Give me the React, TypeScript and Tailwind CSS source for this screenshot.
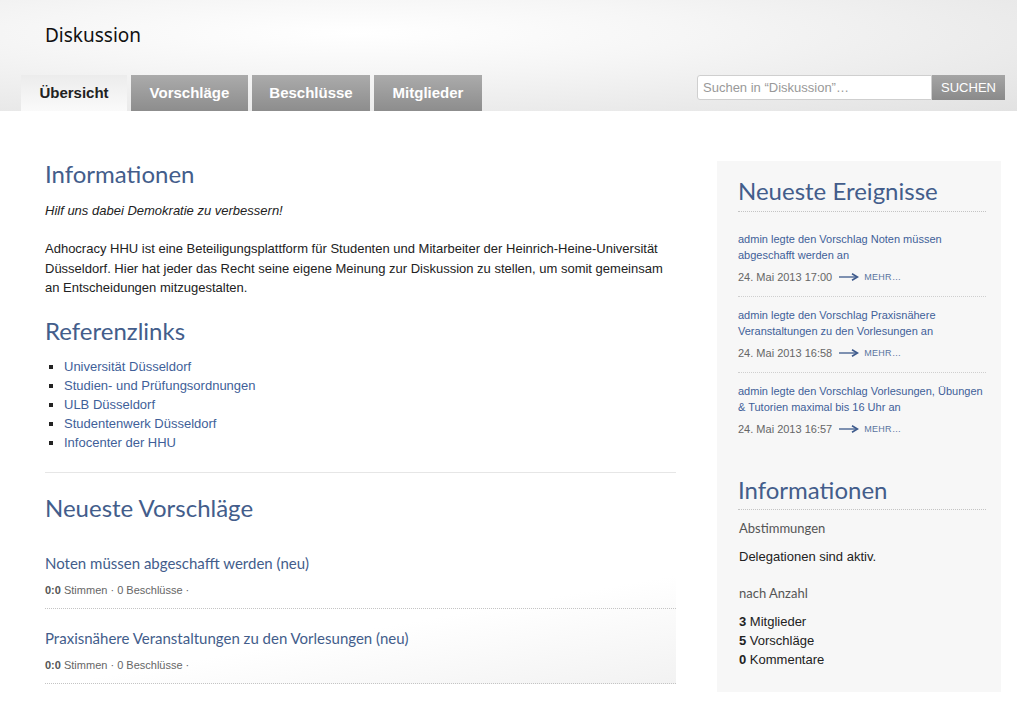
import { ReactNode } from "react";

const tabs = ["Übersicht", "Vorschläge", "Beschlüsse", "Mitglieder"];

const links = [
  "Universität Düsseldorf",
  "Studien- und Prüfungsordnungen",
  "ULB Düsseldorf",
  "Studentenwerk Düsseldorf",
  "Infocenter der HHU",
];

const proposals = [
  "Noten müssen abgeschafft werden (neu)",
  "Praxisnähere Veranstaltungen zu den Vorlesungen (neu)",
];

const events = [
  { text: "admin legte den Vorschlag Noten müssen abgeschafft werden an", date: "24. Mai 2013 17:00" },
  { text: "admin legte den Vorschlag Praxisnähere Veranstaltungen zu den Vorlesungen an", date: "24. Mai 2013 16:58" },
  { text: "admin legte den Vorschlag Vorlesungen, Übungen & Tutorien maximal bis 16 Uhr an", date: "24. Mai 2013 16:57" },
];

function Heading({ children, className = "" }: { children: ReactNode; className?: string }) {
  return (
    <h2 className={`font-['Lato',sans-serif] text-[24px] leading-[30px] text-[#435d8b] ${className}`}>
      {children}
    </h2>
  );
}

function Arrow() {
  return (
    <svg width="20" height="8" viewBox="0 0 20 8" className="ml-[7px] mr-[5px]">
      <path d="M0 4h17" stroke="#3d5a8c" strokeWidth="1.3" fill="none" />
      <path d="M13 0.8L18.5 4L13 7.2" stroke="#3d5a8c" strokeWidth="1.6" fill="none" />
    </svg>
  );
}

export default function App() {
  return (
    <div className="min-h-[701px] bg-white font-['Liberation_Sans',Arial,sans-serif] text-[13px] text-[#222]">
      {/* header */}
      <div className="h-[111px] bg-[radial-gradient(ellipse_at_35%_30%,#ffffff_0%,#f6f6f6_35%,#e2e2e2_100%)] flex flex-col">
        <div className="pl-[45px] pt-[23px] h-[75px] font-['Noto_Sans',sans-serif] text-[19px] leading-[25px] text-[#111]">
          Diskussion
        </div>
        <div className="flex items-end justify-between pl-[21px] pr-[12px]">
          <div className="flex gap-[4px]">
            {tabs.map((t, i) => (
              <div
                key={t}
                className={`h-[36px] flex items-center justify-center font-bold text-[15px] ${
                  i === 0
                    ? "w-[106px] bg-gradient-to-b from-[#ececec] to-[#fafafa] text-[#222]"
                    : "bg-gradient-to-b from-[#ababab] to-[#8d8d8d] text-white"
                } ${i === 1 ? "w-[117px]" : i === 2 ? "w-[118px]" : i === 3 ? "w-[108px]" : ""}`}
              >
                {t}
              </div>
            ))}
          </div>
          <div className="flex h-[25px] mb-[11px]">
            <input
              className="w-[235px] h-[25px] bg-white border border-[#cfcfcf] rounded-l-[3px] px-[5px] text-[13px] outline-none placeholder:text-[#999]"
              placeholder="Suchen in “Diskussion”…"
            />
            <div className="w-[73px] h-[25px] bg-gradient-to-b from-[#a5a5a5] to-[#8a8a8a] text-white text-[13px] flex items-center justify-center">
              SUCHEN
            </div>
          </div>
        </div>
      </div>

      {/* body */}
      <div className="flex pl-[45px] pr-[16px] pt-[50px] gap-[41px]">
        <div className="w-[631px] -mt-[2px]">
          <Heading>Informationen</Heading>
          <p className="italic mt-[12px] leading-[19px]">Hilf uns dabei Demokratie zu verbessern!</p>
          <p className="mt-[19px] leading-[19.5px]">
            Adhocracy HHU ist eine Beteiligungsplattform für Studenten und Mitarbeiter der Heinrich-Heine-Universität
            Düsseldorf. Hier hat jeder das Recht seine eigene Meinung zur Diskussion zu stellen, um somit gemeinsam an
            Entscheidungen mitzugestalten.
          </p>
          <Heading className="mt-[18px]">Referenzlinks</Heading>
          <ul className="mt-[11px] pl-[19px] list-[square] text-[#3f5f99] marker:text-[#222]">
            {links.map((l) => (
              <li key={l} className="leading-[19px]">{l}</li>
            ))}
          </ul>
          <div className="mt-[20px] border-t border-[#e6e6e6]" />
          <Heading className="mt-[20px]">Neueste Vorschläge</Heading>
          <div className="mt-[30px] bg-[linear-gradient(170deg,#ffffff_55%,#f2f2f2_100%)]">
            {proposals.map((p) => (
              <div key={p} className="border-b border-dotted border-[#c4c4c4] pb-[11px] mb-[19px]">
                <div className="font-['Lato',sans-serif] text-[15px] leading-[20px] text-[#435d8b]">{p}</div>
                <div className="mt-[10px] text-[11px] leading-[14px] text-[#666]">
                  <b className="text-[#555]">0:0</b> Stimmen · 0 Beschlüsse ·
                </div>
              </div>
            ))}
          </div>
        </div>

        <div className="w-[284px] bg-[#f7f7f7] px-[21px] pt-[15px] pb-[23px] self-start">
          <Heading className="border-b border-dotted border-[#c4c4c4] pb-[5px] mr-[-6px]">Neueste Ereignisse</Heading>
          <div className="mt-[19px]">
            {events.map((e, i) => (
              <div
                key={i}
                className={`pb-[12px] ${i < events.length - 1 ? "border-b border-dotted border-[#cfcfcf] mb-[10px]" : ""} mr-[-6px]`}
              >
                <div className="text-[11px] leading-[16px] text-[#3f5f99]">{e.text}</div>
                <div className="mt-[7px] flex items-center text-[11px] leading-[14px] text-[#666]">
                  {e.date}
                  <Arrow />
                  <span className="text-[9px] tracking-[0.3px] text-[#5a74a0]">MEHR…</span>
                </div>
              </div>
            ))}
          </div>
          <Heading className="mt-[27px] border-b border-dotted border-[#c4c4c4] pb-[4px] mr-[-6px]">Informationen</Heading>
          <div className="mt-[9px] font-['Lato',sans-serif] text-[13px] leading-[18px] text-[#555] pl-[1px]">Abstimmungen</div>
          <div className="mt-[11px] leading-[18px] text-[#222] pl-[1px]">Delegationen sind aktiv.</div>
          <div className="mt-[18px] font-['Lato',sans-serif] text-[13px] leading-[18px] text-[#555] pl-[1px]">nach Anzahl</div>
          <div className="mt-[10px] leading-[19px] pl-[1px]">
            <div><b>3</b> Mitglieder</div>
            <div><b>5</b> Vorschläge</div>
            <div><b>0</b> Kommentare</div>
          </div>
        </div>
      </div>
    </div>
  );
}
